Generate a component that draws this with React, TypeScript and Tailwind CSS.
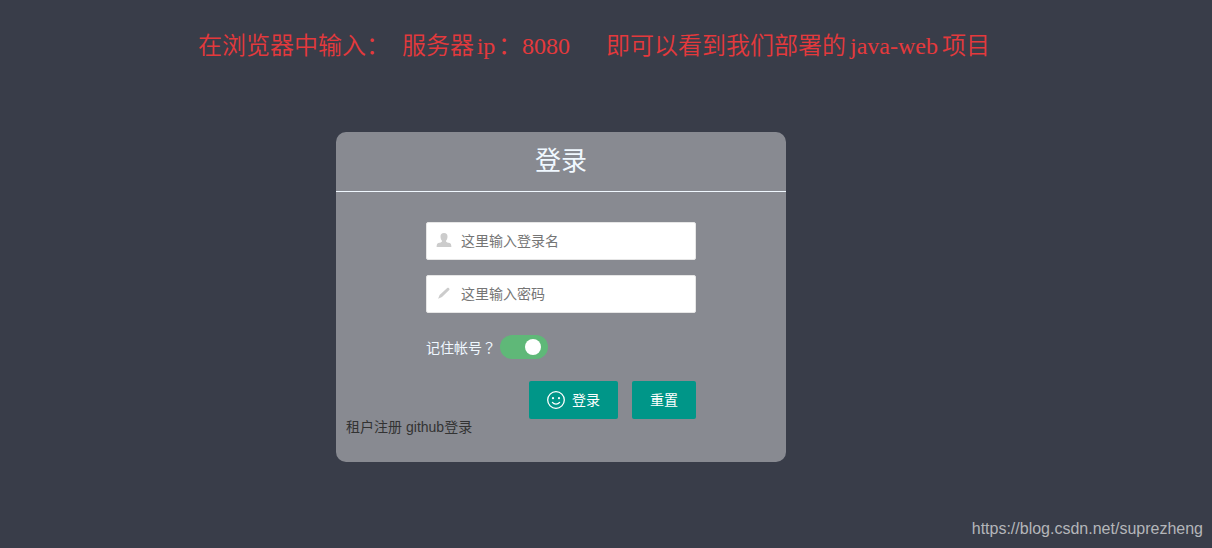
import React, { useState } from 'react';

const UserIcon: React.FC = () => (
  <svg viewBox="0 0 16 16" className="w-4 h-4" fill="#cccccc" aria-hidden="true">
    <path d="M8 1C5.500 1 4.500 2.200 4.500 4.600c0 1.900.6 3.300 1.500 4.200.1 1-.3 1.300-1.200 1.600L2.300 11.100C1.200 11.500.7 12.300.6 15h14.800c-.1-2.700-.6-3.500-1.700-3.900l-2.500-.7c-.9-.3-1.300-.6-1.200-1.600.9-.9 1.500-2.300 1.500-4.200C11.500 2.200 10.500 1 8 1z" />
  </svg>
);

const PencilIcon: React.FC = () => (
  <svg viewBox="0 0 16 16" className="w-4 h-4" fill="#cccccc" aria-hidden="true">
    <path d="M11.200 3c.6-.5 1.100-.5 1.600 0l.4.400c.5.500.5 1 0 1.500L6 12l-3.900 1.700L3.600 10.100z" />
  </svg>
);

const SmileIcon: React.FC = () => (
  <svg viewBox="0 0 18 18" className="w-[18px] h-[18px]" fill="none" stroke="#ffffff" strokeWidth="1.300" strokeLinecap="round" aria-hidden="true">
    <circle cx="9" cy="9" r="8.300" />
    <circle cx="6" cy="7.200" r="1.100" fill="#ffffff" stroke="none" />
    <circle cx="12" cy="7.200" r="1.100" fill="#ffffff" stroke="none" />
    <path d="M5.400 11.400c1.700 2.200 5.500 2.200 7.200 0" />
  </svg>
);

interface FieldProps {
  id: string;
  type: string;
  label: string;
  value: string;
  icon: React.ReactNode;
  onChange: (value: string) => void;
}

const Field: React.FC<FieldProps> = ({ id, type, label, value, icon, onChange }) => (
  <div className="flex items-center h-[38px] bg-white border border-[#e6e6e6] rounded-xs">
    <label htmlFor={id} aria-label={label} className="px-[9px] pb-[2px]">
      {icon}
    </label>
    <input
      id={id}
      type={type}
      value={value}
      placeholder={label}
      onChange={(e) => onChange(e.target.value)}
      className="flex-1 min-w-0 h-full bg-transparent outline-none text-gray-700 placeholder:text-[#757575]"
    />
  </div>
);

const App: React.FC = () => {
  const [username, setUsername] = useState('');
  const [password, setPassword] = useState('');
  const [remember, setRemember] = useState(true);

  const handleReset = () => {
    setUsername('');
    setPassword('');
  };

  return (
    <div className="min-h-screen flex flex-col bg-[#393d49] font-['Liberation_Sans','Noto_Sans_CJK_SC',sans-serif] text-sm">
      <p className="pt-7 pr-6 text-center whitespace-pre text-2xl leading-9 text-[#e4393c] font-[350] font-['Liberation_Serif','Noto_Sans_CJK_SC',serif]">
        在浏览器中输入：
        <span className="inline-block w-3">{' '}</span>
        服务器
        <span className="inline-block w-6 text-center">ip</span>
        ：8080
        <span className="inline-block w-9">{'   '}</span>
        即可以看到我们部署的
        <span className="inline-block w-24 text-center">java-web</span>
        项目
      </p>

      <main className="flex justify-center mt-[68px] pr-[90px]">
        <form
          onSubmit={(e) => e.preventDefault()}
          className="w-full max-w-[450px] pb-[27px] rounded-[10px] bg-white/40"
        >
          <h1 className="h-[60px] flex items-center justify-center border-b border-[#f0f8ff] text-[26px] text-[#f0f8ff]">
            登录
          </h1>

          <div className="flex flex-col gap-[15px] px-[90px] pt-[30px]">
            <Field id="username" type="text" label="这里输入登录名" value={username} icon={<UserIcon />} onChange={setUsername} />
            <Field id="password" type="password" label="这里输入密码" value={password} icon={<PencilIcon />} onChange={setPassword} />

            <label className="flex items-center gap-1 h-[38px] text-[#f0f8ff]">
              <span className="font-['Noto_Sans_CJK_TC',sans-serif]">记住帐号？</span>
              <input
                type="checkbox"
                checked={remember}
                onChange={(e) => setRemember(e.target.checked)}
                className="peer sr-only"
              />
              <span className="flex items-center w-12 h-6 px-[7px] rounded-full bg-gray-400 peer-checked:bg-[#5fb878] peer-checked:justify-end">
                <span className="w-4 h-4 rounded-full bg-white"></span>
              </span>
            </label>

            <div className="flex justify-end gap-[14px] text-white">
              <button type="submit" className="flex items-center gap-[7px] h-[38px] px-[18px] bg-[#009688] rounded-xs hover:opacity-80">
                <SmileIcon />
                登录
              </button>
              <button type="button" onClick={handleReset} className="h-[38px] px-[18px] bg-[#009688] rounded-xs hover:opacity-80">
                重置
              </button>
            </div>
          </div>

          <div className="flex gap-1 px-[10px] leading-4 text-[#333333]">
            <a href="#register">租户注册</a>
            <a href="#github">github登录</a>
          </div>
        </form>
      </main>

      <footer className="mt-auto pr-[9px] pb-[7px] text-right text-base text-[#b4b6ba]">
        https://blog.csdn.net/suprezheng
      </footer>
    </div>
  );
};

export default App;
